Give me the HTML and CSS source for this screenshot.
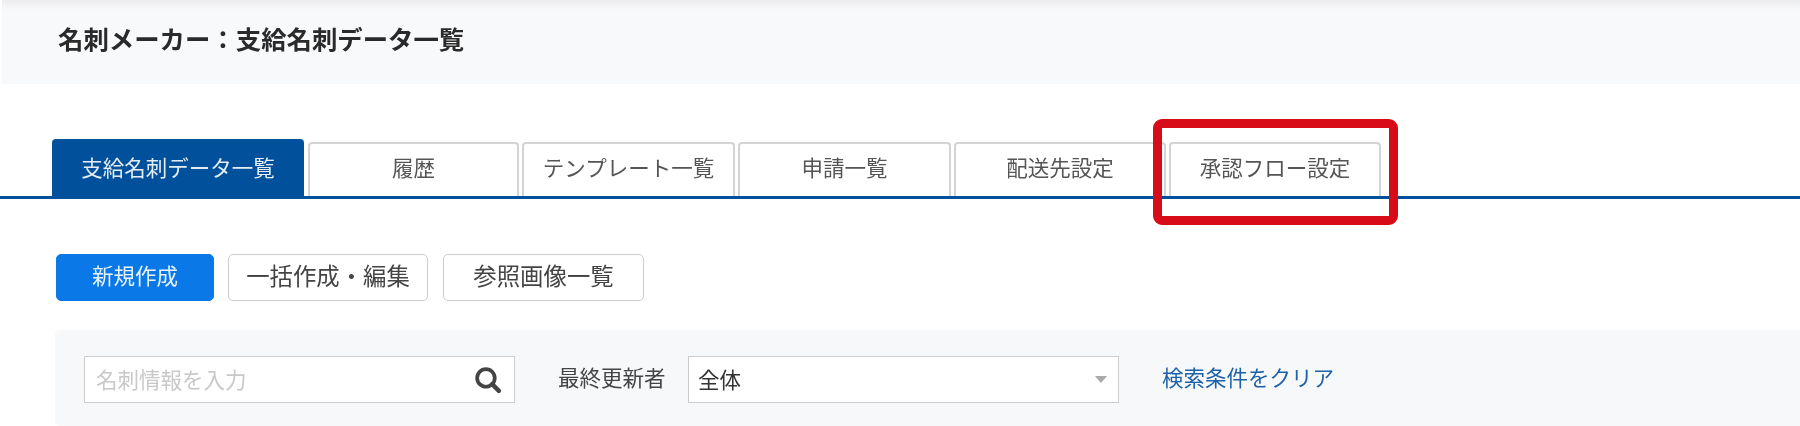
FILE: index.html
```html
<!DOCTYPE html>
<html lang="ja">
<head>
  <meta charset="UTF-8">
  <title>支給名刺データ一覧</title>
  <link rel="stylesheet" href="styles.css">
</head>
<body>

  <!-- Page header -->
  <header class="page-header">
    <h1>名刺メーカー：支給名刺データ一覧</h1>
  </header>

  <!-- Tabs -->
  <nav class="tabs">
    <a class="tab tab-active tab-first">支給名刺データ一覧</a>
    <a class="tab tab-history">履歴</a>
    <a class="tab tab-template">テンプレート一覧</a>
    <a class="tab tab-request">申請一覧</a>
    <a class="tab tab-delivery">配送先設定</a>
    <a class="tab tab-approval">承認フロー設定</a>
    <div class="callout"></div>
  </nav>

  <!-- Actions -->
  <div class="actions">
    <button class="btn btn-primary">新規作成</button>
    <button class="btn btn-bulk">一括作成・編集</button>
    <button class="btn btn-images">参照画像一覧</button>
  </div>

  <!-- Search -->
  <section class="search-panel">
    <div class="search-box">
      <span class="placeholder">名刺情報を入力</span>
      <svg class="search-icon" viewBox="0 0 28 28" width="29" height="29">
        <circle cx="12.5" cy="12.5" r="8.5" fill="none" stroke="#444" stroke-width="3.6"/>
        <path d="M18.5 18.5 L25 25" stroke="#444" stroke-width="4.2" stroke-linecap="round"/>
      </svg>
    </div>
    <span class="search-label">最終更新者</span>
    <div class="select-box">
      <span>全体</span>
      <span class="select-arrow"></span>
    </div>
    <a class="clear-link">検索条件をクリア</a>
  </section>

</body>
</html>
```

FILE: styles.css
```css
body {
  margin: 0;
  height: 426px;
  overflow: hidden;
  background-color: #fff;
  color: #333;
  font-family: "Noto Sans CJK JP", "Noto Sans", sans-serif;
  font-size: 21.5px;
  font-weight: 400;
  filter: blur(0.5px);
}

.page-header {
  box-sizing: border-box;
  height: 84px;
  margin-left: 2px;
  padding-bottom: 8px;
  padding-left: 56px;
  background-color: #f8f9fb;
  background-image: linear-gradient(#ececee, #f8f9fb 10px);
  display: flex;
  align-items: center;
}

h1 {
  margin: 0;
  font-size: 25.4px;
  font-weight: 700;
  color: #2a2a2a;
  line-height: 30px;
}

.tabs {
  position: relative;
  margin-top: 55px;
  height: 57px;
  padding-left: 52px;
  display: flex;
  align-items: flex-end;
  gap: 3px;
  border-bottom: 3px solid #00509b;
}

.tab {
  box-sizing: border-box;
  height: 54px;
  padding-bottom: 7px;
  border: 2px solid #d4d4d4;
  border-bottom: 0;
  border-radius: 4px 4px 0 0;
  display: flex;
  align-items: center;
  justify-content: center;
  color: #555;
}

.tab-active {
  height: 57px;
  padding-bottom: 3px;
  border: 0;
  background-color: #00509b;
  color: #e4edf5;
}

.tab-first { width: 252px; margin-right: 1px; }
.tab-history { width: 211px; }
.tab-template { width: 213px; }
.tab-request { width: 213px; }
.tab-delivery { width: 212px; }
.tab-approval { width: 212px; }

/* red annotation around the last tab */
.callout {
  position: absolute;
  left: 1153px;
  top: -20px;
  width: 245px;
  height: 106px;
  box-sizing: border-box;
  border: 9px solid #d80c18;
  border-radius: 9px;
}

.actions {
  display: flex;
  margin-top: 55px;
  margin-left: 56px;
  gap: 15px;
}

.btn {
  box-sizing: border-box;
  height: 47px;
  padding: 0 0 6px;
  border: 1px solid #ccc;
  border-radius: 5px;
  background-color: #fff;
  color: #444;
  font-family: inherit;
  font-size: 23.4px;
  font-weight: 400;
}

.btn-primary {
  width: 158px;
  margin-right: -1px;
  border-color: #0a78e6;
  background-color: #0a78e6;
  color: #e9f3fd;
  font-size: 21.5px;
}

.btn-bulk { width: 200px; }
.btn-images { width: 201px; }

.search-panel {
  margin-top: 29px;
  margin-left: 55px;
  height: 96px;
  padding-left: 29px;
  padding-top: 26px;
  box-sizing: border-box;
  background-color: #f7f8fa;
  border-radius: 5px 0 0 5px;
  display: flex;
  align-items: flex-start;
}

.search-box, .select-box {
  box-sizing: border-box;
  height: 47px;
  padding-bottom: 3px;
  border: 1px solid #ccc;
  background-color: #fff;
  display: flex;
  align-items: center;
  justify-content: space-between;
}

.search-box {
  width: 431px;
  padding-left: 11px;
  padding-right: 12px;
}

.placeholder {
  color: #c8c8c8;
}

.search-icon {
  margin-top: 3px;
}

.search-label {
  margin-left: 43px;
  width: 130px;
  line-height: 42px;
  color: #444;
}

.select-box {
  width: 431px;
  padding-left: 9px;
  padding-right: 11px;
  color: #333;
}

.select-arrow {
  margin-top: 3px;
  width: 0;
  height: 0;
  border-left: 6px solid transparent;
  border-right: 6px solid transparent;
  border-top: 7px solid #aaa;
}

.clear-link {
  margin-left: 43px;
  line-height: 42px;
  color: #1d62a8;
}
```
